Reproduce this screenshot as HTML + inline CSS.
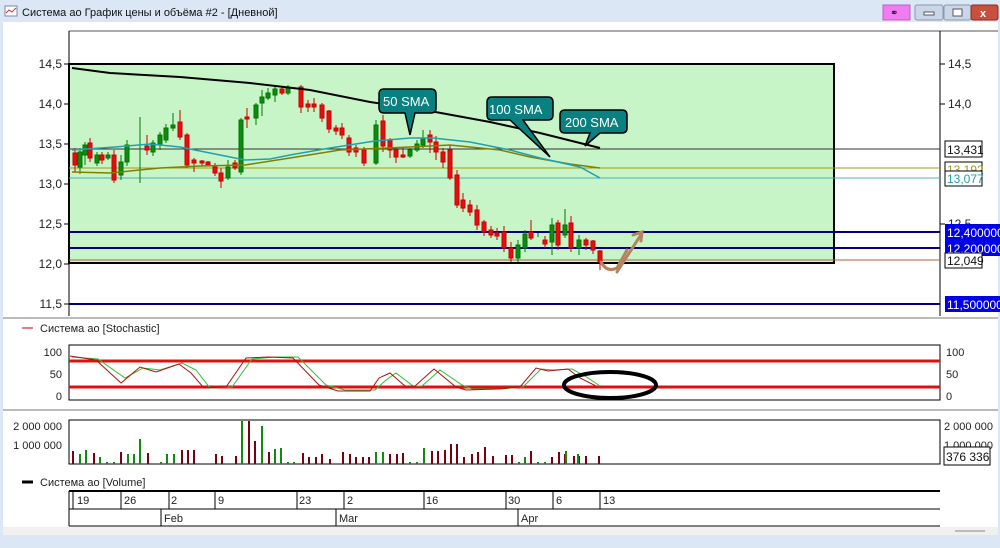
<!DOCTYPE html>
<html><head><meta charset="utf-8"><style>
body{margin:0;width:1000px;height:543px;overflow:hidden;background:#dbe7f5;font-family:"Liberation Sans","DejaVu Sans",sans-serif}
svg text{font-family:"Liberation Sans","DejaVu Sans",sans-serif}
</style></head><body>
<svg width="1000" height="543" xmlns="http://www.w3.org/2000/svg">
<rect x="0" y="0" width="1000" height="543" fill="#dbe7f5"/>
<!-- title -->
<rect x="5" y="6" width="12" height="10" fill="#fff" stroke="#7a8aa0"/>
<path d="M6 13 L9 10 L12 12 L16 8" stroke="#c33" fill="none"/>
<text x="22" y="16" font-size="11" fill="#111">Система ао График цены и объёма #2 - [Дневной]</text>
<rect x="883" y="5" width="27" height="15" fill="#f07cf0" stroke="#c060c0"/>
<text x="890" y="16" font-size="10" fill="#303">⚭</text>
<rect x="915" y="5" width="28" height="15" rx="2" fill="#c8d6e8" stroke="#8898b0"/>
<rect x="924" y="12" width="10" height="3" fill="#fff" stroke="#556"/>
<rect x="944" y="5" width="27" height="15" rx="2" fill="#c8d6e8" stroke="#8898b0"/>
<rect x="953" y="9" width="9" height="7" fill="#fff" stroke="#556"/>
<rect x="971" y="5" width="27" height="15" rx="2" fill="#c8503c" stroke="#8a2a20"/>
<text x="980" y="17" font-size="11" font-weight="bold" fill="#fff">x</text>
<!-- content -->
<rect x="3" y="22" width="995" height="513" fill="#fff"/>
<rect x="3" y="527" width="995" height="8" fill="#f0f0f0"/>
<line x1="955" y1="531" x2="985" y2="531" stroke="#bbb" stroke-width="2"/>
<line x1="69" y1="31" x2="998" y2="31" stroke="#555"/>
<!-- main -->
<rect x="69" y="64" width="765" height="199" fill="#c8f5c8" stroke="#000" stroke-width="2"/>
<line x1="69" y1="31" x2="69" y2="316" stroke="#000"/>
<line x1="940" y1="31" x2="940" y2="316" stroke="#000"/>
<g stroke="#000">
<line x1="64" y1="64" x2="69" y2="64"/><line x1="64" y1="104" x2="69" y2="104"/><line x1="64" y1="144" x2="69" y2="144"/><line x1="64" y1="184" x2="69" y2="184"/><line x1="64" y1="224" x2="69" y2="224"/><line x1="64" y1="264" x2="69" y2="264"/><line x1="64" y1="304" x2="69" y2="304"/>
<line x1="940" y1="64" x2="945" y2="64"/><line x1="940" y1="104" x2="945" y2="104"/><line x1="940" y1="224" x2="945" y2="224"/>
</g>
<g font-size="12" fill="#222" text-anchor="end">
<text x="62" y="68">14,5</text><text x="62" y="108">14,0</text><text x="62" y="148">13,5</text><text x="62" y="188">13,0</text><text x="62" y="228">12,5</text><text x="62" y="268">12,0</text><text x="62" y="308">11,5</text>
</g>
<g font-size="12" fill="#222"><text x="948" y="68">14,5</text><text x="948" y="108">14,0</text><text x="948" y="228">12,5</text></g>
<!-- level lines -->
<line x1="69" y1="149" x2="940" y2="149" stroke="#333"/>
<line x1="69" y1="168" x2="940" y2="168" stroke="#a09a20"/>
<line x1="69" y1="178" x2="940" y2="178" stroke="#50b0c0"/>
<line x1="69" y1="232" x2="940" y2="232" stroke="#000080" stroke-width="2"/>
<line x1="69" y1="248" x2="940" y2="248" stroke="#000080" stroke-width="2"/>
<line x1="69" y1="260" x2="940" y2="260" stroke="#b06040"/>
<line x1="69" y1="304" x2="940" y2="304" stroke="#000080" stroke-width="2"/>
<!-- candles -->
<g id="c" stroke-width="1">
<g stroke="#c00" fill="#e01010">
<line x1="75" y1="148" x2="75" y2="172"/><rect x="73" y="153" width="4" height="12"/>
<line x1="90" y1="138" x2="90" y2="162"/><rect x="88" y="143" width="4" height="15"/>
<line x1="102" y1="152" x2="102" y2="164"/><rect x="100" y="155" width="4" height="5"/>
<line x1="114" y1="150" x2="114" y2="183"/><rect x="112" y="155" width="4" height="25"/>
<line x1="147" y1="135" x2="147" y2="155"/><rect x="145" y="146" width="4" height="4"/>
<line x1="180" y1="110" x2="180" y2="140"/><rect x="178" y="122" width="4" height="15"/>
<line x1="187" y1="133" x2="187" y2="168"/><rect x="185" y="135" width="4" height="30"/>
<line x1="194" y1="158" x2="194" y2="172"/><rect x="192" y="160" width="4" height="3"/>
<line x1="202" y1="160" x2="202" y2="166"/><rect x="200" y="161" width="4" height="2"/>
<line x1="208" y1="161" x2="208" y2="166"/><rect x="206" y="162" width="4" height="3"/>
<line x1="215" y1="163" x2="215" y2="176"/><rect x="213" y="167" width="4" height="6"/>
<line x1="221" y1="168" x2="221" y2="188"/><rect x="219" y="173" width="4" height="8"/>
<line x1="235" y1="160" x2="235" y2="170"/><rect x="233" y="163" width="4" height="5"/>
<line x1="247" y1="108" x2="247" y2="128"/><rect x="245" y="117" width="4" height="2"/>
<line x1="282" y1="87" x2="282" y2="95"/><rect x="280" y="89" width="4" height="4"/>
<line x1="301" y1="85" x2="301" y2="113"/><rect x="299" y="87" width="4" height="20"/>
<line x1="308" y1="100" x2="308" y2="112"/><rect x="306" y="104" width="4" height="3"/>
<line x1="314" y1="98" x2="314" y2="112"/><rect x="312" y="104" width="4" height="3"/>
<line x1="322" y1="103" x2="322" y2="122"/><rect x="320" y="105" width="4" height="13"/>
<line x1="329" y1="110" x2="329" y2="133"/><rect x="327" y="111" width="4" height="18"/>
<line x1="336" y1="125" x2="336" y2="135"/><rect x="334" y="128" width="4" height="3"/>
<line x1="342" y1="123" x2="342" y2="139"/><rect x="340" y="128" width="4" height="7"/>
<line x1="349" y1="135" x2="349" y2="156"/><rect x="347" y="138" width="4" height="14"/>
<line x1="356" y1="145" x2="356" y2="157"/><rect x="354" y="148" width="4" height="4"/>
<line x1="364" y1="147" x2="364" y2="166"/><rect x="362" y="150" width="4" height="13"/>
<line x1="383" y1="115" x2="383" y2="152"/><rect x="381" y="121" width="4" height="25"/>
<line x1="390" y1="138" x2="390" y2="158"/><rect x="388" y="140" width="4" height="10"/>
<line x1="396" y1="148" x2="396" y2="163"/><rect x="394" y="150" width="4" height="7"/>
<line x1="403" y1="148" x2="403" y2="158"/><rect x="401" y="155" width="4" height="2"/>
<line x1="430" y1="130" x2="430" y2="153"/><rect x="428" y="135" width="4" height="7"/>
<line x1="436" y1="136" x2="436" y2="160"/><rect x="434" y="142" width="4" height="10"/>
<line x1="443" y1="148" x2="443" y2="168"/><rect x="441" y="152" width="4" height="10"/>
<line x1="450" y1="145" x2="450" y2="180"/><rect x="448" y="150" width="4" height="28"/>
<line x1="457" y1="170" x2="457" y2="208"/><rect x="455" y="175" width="4" height="30"/>
<line x1="463" y1="193" x2="463" y2="212"/><rect x="461" y="200" width="4" height="8"/>
<line x1="470" y1="200" x2="470" y2="216"/><rect x="468" y="205" width="4" height="7"/>
<line x1="477" y1="205" x2="477" y2="230"/><rect x="475" y="210" width="4" height="15"/>
<line x1="484" y1="220" x2="484" y2="236"/><rect x="482" y="222" width="4" height="10"/>
<line x1="491" y1="226" x2="491" y2="238"/><rect x="489" y="230" width="4" height="5"/>
<line x1="497" y1="228" x2="497" y2="240"/><rect x="495" y="233" width="4" height="3"/>
<line x1="504" y1="226" x2="504" y2="252"/><rect x="502" y="232" width="4" height="16"/>
<line x1="511" y1="242" x2="511" y2="262"/><rect x="509" y="248" width="4" height="10"/>
<line x1="531" y1="220" x2="531" y2="240"/><rect x="529" y="232" width="4" height="6"/>
<line x1="545" y1="236" x2="545" y2="248"/><rect x="543" y="240" width="4" height="4"/>
<line x1="558" y1="220" x2="558" y2="250"/><rect x="556" y="223" width="4" height="22"/>
<line x1="571" y1="216" x2="571" y2="252"/><rect x="569" y="223" width="4" height="25"/>
<line x1="586" y1="238" x2="586" y2="250"/><rect x="584" y="240" width="4" height="5"/>
<line x1="593" y1="240" x2="593" y2="254"/><rect x="591" y="241" width="4" height="9"/>
<line x1="600" y1="250" x2="600" y2="270"/><rect x="598" y="251" width="4" height="11"/>
</g>
<g stroke="#070" fill="#108a10">
<line x1="80" y1="148" x2="80" y2="174"/><rect x="78" y="152" width="4" height="15"/>
<line x1="85" y1="142" x2="85" y2="165"/><rect x="83" y="145" width="4" height="10"/>
<line x1="97" y1="152" x2="97" y2="166"/><rect x="95" y="155" width="4" height="8"/>
<line x1="108" y1="152" x2="108" y2="160"/><rect x="106" y="155" width="4" height="3"/>
<line x1="121" y1="155" x2="121" y2="180"/><rect x="119" y="162" width="4" height="13"/>
<line x1="127" y1="140" x2="127" y2="166"/><rect x="125" y="145" width="4" height="17"/>
<line x1="140" y1="117" x2="140" y2="183"/>
<line x1="153" y1="140" x2="153" y2="156"/><rect x="151" y="143" width="4" height="9"/>
<line x1="160" y1="132" x2="160" y2="150"/><rect x="158" y="135" width="4" height="10"/>
<line x1="166" y1="124" x2="166" y2="143"/><rect x="164" y="128" width="4" height="12"/>
<line x1="173" y1="113" x2="173" y2="131"/><rect x="171" y="125" width="4" height="3"/>
<line x1="228" y1="160" x2="228" y2="180"/><rect x="226" y="167" width="4" height="11"/>
<line x1="241" y1="118" x2="241" y2="175"/><rect x="239" y="120" width="4" height="52"/>
<line x1="256" y1="103" x2="256" y2="125"/><rect x="254" y="105" width="4" height="13"/>
<line x1="262" y1="90" x2="262" y2="116"/><rect x="260" y="97" width="4" height="6"/>
<line x1="268" y1="88" x2="268" y2="100"/><rect x="266" y="93" width="4" height="5"/>
<line x1="275" y1="86" x2="275" y2="102"/><rect x="273" y="89" width="4" height="6"/>
<line x1="288" y1="85" x2="288" y2="95"/><rect x="286" y="87" width="4" height="6"/>
<line x1="376" y1="120" x2="376" y2="165"/><rect x="374" y="125" width="4" height="38"/>
<line x1="410" y1="148" x2="410" y2="158"/><rect x="408" y="150" width="4" height="6"/>
<line x1="417" y1="140" x2="417" y2="152"/><rect x="415" y="144" width="4" height="6"/>
<line x1="423" y1="130" x2="423" y2="148"/><rect x="421" y="138" width="4" height="7"/>
<line x1="518" y1="240" x2="518" y2="262"/><rect x="516" y="245" width="4" height="13"/>
<line x1="525" y1="230" x2="525" y2="252"/><rect x="523" y="234" width="4" height="14"/>
<line x1="538" y1="233" x2="538" y2="237"/>
<line x1="552" y1="218" x2="552" y2="255"/><rect x="550" y="225" width="4" height="17"/>
<line x1="565" y1="209" x2="565" y2="238"/><rect x="563" y="225" width="4" height="10"/>
<line x1="579" y1="235" x2="579" y2="255"/><rect x="577" y="240" width="4" height="8"/>
</g>
</g>
<!-- SMAs -->
<polyline fill="none" stroke="#000" stroke-width="2" points="72,68 110,73 180,77 250,83 310,90 370,102 430,111 490,122 540,133 580,143 600,148"/>
<polyline fill="none" stroke="#808000" stroke-width="1.5" points="72,172 110,173 160,168 200,166 245,165 290,158 340,150 410,147 450,145 500,150 530,157 570,164 600,168"/>
<polyline fill="none" stroke="#20a0b0" stroke-width="1.5" points="72,150 115,147 150,144 180,147 220,155 245,160 270,159 290,155 330,148 375,141 410,138 433,138 470,142 510,150 540,158 580,167 600,178"/>
<!-- callouts -->
<g stroke="#000" stroke-width="1.5" fill="#0a8080">
<path d="M384 89 H431 Q436 89 436 94 V108 Q436 113 431 113 H415 L410 135 L405 113 H384 Q379 113 379 108 V94 Q379 89 384 89 Z"/>
<path d="M492 97 H548 Q553 97 553 102 V115 Q553 120 548 120 H523 L550 157 L510 120 H492 Q487 120 487 115 V102 Q487 97 492 97 Z"/>
<path d="M565 110 H622 Q627 110 627 115 V128 Q627 133 622 133 H600 L585 146 L590 133 H565 Q560 133 560 128 V115 Q560 110 565 110 Z"/>
</g>
<g fill="#fff" font-size="13"><text x="383" y="106">50 SMA</text><text x="489" y="114">100 SMA</text><text x="565" y="127">200 SMA</text></g>
<!-- arrow -->
<g stroke="#b5835f" stroke-width="3" fill="none" stroke-linecap="round">
<path d="M601 262 Q607 273 617 268 L627 250"/>
<path d="M617 272 L642 233"/>
<path d="M633 235 L642 232 L641 241"/>
</g>
<!-- right labels -->
<g font-size="12">
<rect x="945" y="162" width="37" height="14" fill="#fff" stroke="#000"/><text x="947" y="174" fill="#a09a20">13,192</text>
<rect x="945" y="141" width="37" height="16" fill="#fff" stroke="#000"/><text x="947" y="154" fill="#111">13,431</text>
<rect x="945" y="171" width="37" height="15" fill="#fff" stroke="#000"/><text x="947" y="183" fill="#20a0b0">13,077</text>
<rect x="945" y="224" width="55" height="16" fill="#0000ee"/><text x="947" y="237" fill="#fff">12,400000</text>
<rect x="945" y="240" width="55" height="16" fill="#0000ee"/><text x="947" y="253" fill="#fff">12,200000</text>
<rect x="945" y="253" width="37" height="15" fill="#fff" stroke="#000"/><text x="947" y="265" fill="#111">12,049</text>
<rect x="945" y="296" width="55" height="16" fill="#0000ee"/><text x="947" y="309" fill="#fff">11,500000</text>
</g>
<line x1="3" y1="318" x2="998" y2="318" stroke="#bbb" stroke-width="2"/>
<!-- stochastic -->
<line x1="22" y1="328" x2="33" y2="328" stroke="#c00"/>
<text x="40" y="332" font-size="11" fill="#222">Система ао [Stochastic]</text>
<rect x="69" y="345" width="871" height="55" fill="#fff" stroke="#000"/>
<g font-size="11" fill="#222"><text x="62" y="356" text-anchor="end">100</text><text x="62" y="378" text-anchor="end">50</text><text x="62" y="400" text-anchor="end">0</text>
<text x="946" y="356">100</text><text x="946" y="378">50</text><text x="946" y="400">0</text></g>
<line x1="69" y1="361" x2="940" y2="361" stroke="#e01010" stroke-width="3"/>
<line x1="69" y1="387" x2="940" y2="387" stroke="#e01010" stroke-width="3"/>
<polyline fill="none" stroke="#30c030" points="72,357 98,359 125,378 143,368 160,370 182,363 196,370 210,388 232,387 252,359 275,357 298,357 326,385 345,390 375,390 386,380 396,373 413,386 422,386 440,370 462,385 472,389 500,389 523,387 541,369 553,370 572,369 585,376 600,386"/>
<polyline fill="none" stroke="#b01010" points="70,356 96,360 121,383 140,367 156,372 179,364 191,373 204,388 226,387 246,358 268,357 293,358 319,385 338,391 370,391 379,378 390,373 405,386 415,386 434,369 456,387 466,390 497,389 520,387 536,368 548,371 568,369 580,378 596,386"/>
<ellipse cx="610" cy="385" rx="46" ry="13" fill="none" stroke="#000" stroke-width="4"/>
<line x1="3" y1="410" x2="998" y2="410" stroke="#bbb" stroke-width="2"/>
<!-- volume -->
<rect x="69" y="420" width="871" height="44" fill="#fff" stroke="#000"/>
<g font-size="11" fill="#222"><text x="62" y="430" text-anchor="end">2 000 000</text><text x="62" y="449" text-anchor="end">1 000 000</text>
<text x="944" y="430">2 000 000</text><text x="944" y="449">1 000 000</text></g>
<rect x="944" y="447" width="46" height="18" fill="#fff" stroke="#000"/><text x="946" y="461" font-size="12" fill="#111">376 336</text>
<g stroke-width="2">
<path stroke="#7a0010" d="M73 464V451M94 464V453M121 464V452M148 464V453M182 464V450M188 464V450M194 464V450M201 464V464M207 464V464M216 464V454M222 464V456M236 464V456M249 464V421M255 464V441M269 464V452M303 464V453M309 464V457M316 464V457M322 464V454M330 464V459M343 464V452M350 464V454M356 464V457M363 464V457M369 464V457M390 464V454M397 464V454M403 464V453M432 464V451M438 464V451M445 464V450M451 464V444M457 464V444M464 464V457M472 464V454M478 464V452M485 464V447M493 464V456M506 464V455M512 464V455M531 464V451M552 464V457M559 464V452M565 464V454M574 464V456M579 464V456M586 464V456M593 464V464M599 464V456"/>
<path stroke="#108a10" d="M80 464V454M86 464V450M100 464V457M107 464V462M114 464V462M128 464V454M134 464V454M140 464V439M161 464V462M167 464V454M174 464V454M228 464V464M242 464V421M262 464V426M275 464V449M281 464V448M288 464V462M294 464V462M376 464V452M383 464V452M410 464V462M417 464V462M424 464V448M519 464V462M525 464V457M538 464V462M545 464V462M566 464V451M578 464V454"/>
</g>
<line x1="22" y1="482" x2="33" y2="482" stroke="#000" stroke-width="3"/>
<text x="40" y="486" font-size="11" fill="#222">Система ао [Volume]</text>
<!-- date axis -->
<rect x="69" y="491" width="871" height="35" fill="#fff"/>
<line x1="69" y1="491" x2="940" y2="491" stroke="#000" stroke-width="2"/>
<line x1="69" y1="509" x2="940" y2="509" stroke="#000"/>
<line x1="69" y1="526" x2="940" y2="526" stroke="#000"/>
<line x1="69" y1="491" x2="69" y2="526" stroke="#000"/>
<g stroke="#000"><path d="M73 491V509M121 491V509M169 491V509M215 491V509M297 491V509M344 491V509M424 491V509M506 491V509M553 491V509M600 491V509M161 509V526M336 509V526M518 509V526"/></g>
<g font-size="11" fill="#222">
<text x="77" y="504">19</text><text x="124" y="504">26</text><text x="171" y="504">2</text><text x="218" y="504">9</text><text x="299" y="504">23</text><text x="347" y="504">2</text><text x="426" y="504">16</text><text x="508" y="504">30</text><text x="556" y="504">6</text><text x="603" y="504">13</text>
<text x="164" y="522">Feb</text><text x="339" y="522">Mar</text><text x="521" y="522">Apr</text>
</g>
</svg>
</body></html>
